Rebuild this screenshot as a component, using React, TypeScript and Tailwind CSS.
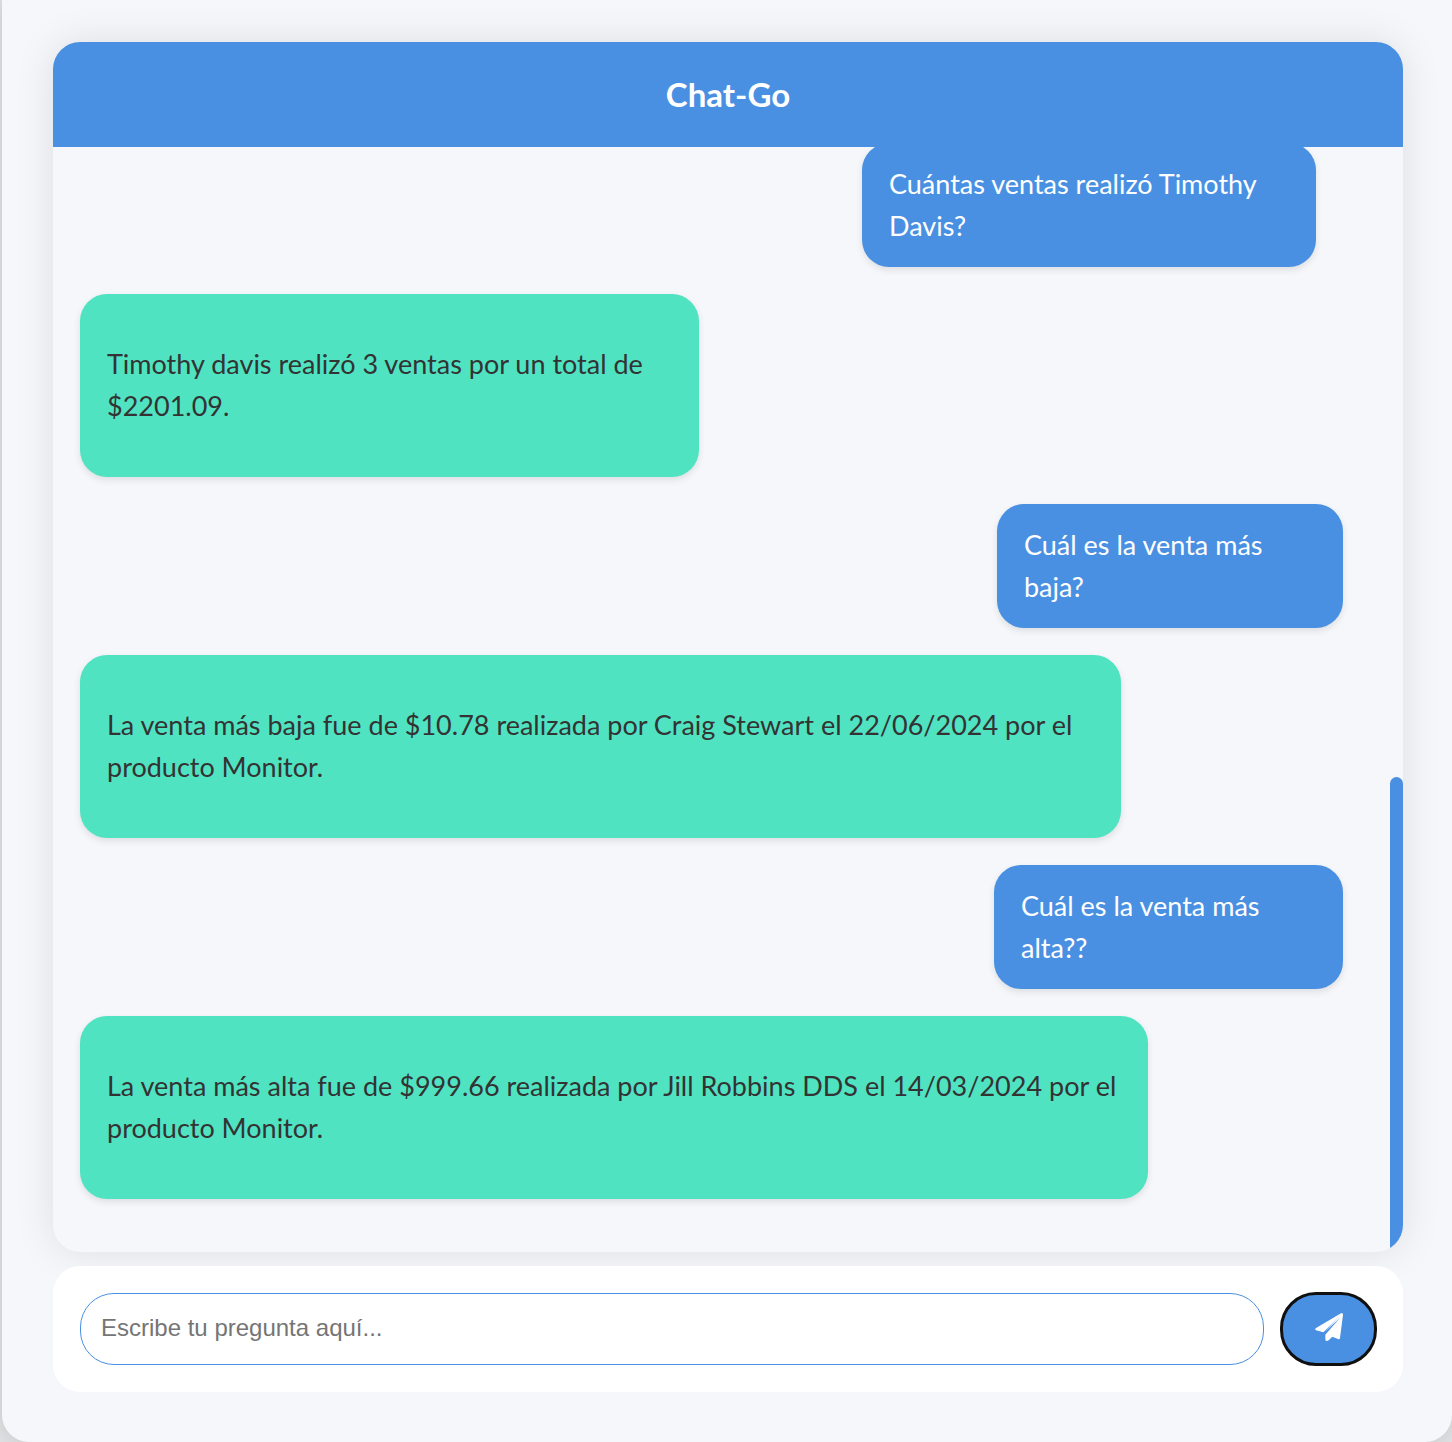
import { useState } from "react";
import type { FormEvent } from "react";

type Message = { from: "user" | "bot"; text: string; box: string };

const messages: Message[] = [
  { from: "user", text: "Cuántas ventas realizó Timothy Davis?", box: "w-[454px] mr-[47px]" },
  { from: "bot", text: "Timothy davis realizó 3 ventas por un total de $2201.09.", box: "w-[619px]" },
  { from: "user", text: "Cuál es la venta más baja?", box: "w-[346px] mr-5" },
  {
    from: "bot",
    text: "La venta más baja fue de $10.78 realizada por Craig Stewart el 22/06/2024 por el producto Monitor.",
    box: "w-[1041px]",
  },
  { from: "user", text: "Cuál es la venta más alta??", box: "w-[349px] mr-5" },
  {
    from: "bot",
    text: "La venta más alta fue de $999.66 realizada por Jill Robbins DDS el 14/03/2024 por el producto Monitor.",
    box: "w-[1068px]",
  },
];

function Bubble({ message }: { message: Message }) {
  const look =
    message.from === "user"
      ? "self-end bg-[#4a90e2] py-5 text-white"
      : "self-start bg-[#50e3c2] pt-[49px] pb-[50px] text-[#333333]";
  return (
    <li
      className={`max-w-full rounded-[27px] px-[27px] text-[27px] leading-[42px] shadow-[0_3px_7px_rgba(0,0,0,0.1)] ${look} ${message.box}`}
    >
      <p>{message.text}</p>
    </li>
  );
}

function PaperPlane() {
  return (
    <svg viewBox="0 0 84 84" className="size-[28px]" fill="currentColor" aria-hidden="true">
      <path d="M2 46 L78 1 Q81 0 80 2 L25 58 L3 52 Q-1 49 2 46 Z" />
      <path d="M80 1 Q84 0 84 5 L75 75 Q74 80 69 78 L52 71 L41 82 Q38 84 35 84 Q31 84 31 79 L31 65 L75 14 L28 58 Z" />
    </svg>
  );
}

export default function App() {
  const [question, setQuestion] = useState("");
  const submit = (event: FormEvent) => {
    event.preventDefault();
    setQuestion("");
  };

  return (
    <div className="overflow-hidden bg-[#dfe1e3] pl-0.5 font-['Lato',sans-serif]">
      <main className="rounded-b-[27px] bg-[#f5f7fa] pt-[42px] pr-[49px] pb-[50px] pl-[51px] shadow-[0_0_20px_rgba(0,0,0,0.12)]">
        <section className="overflow-hidden rounded-[27px] bg-[#f5f7fa] shadow-[0_0_40px_rgba(0,0,0,0.1)]">
          <header className="relative z-10 bg-[#4a90e2] py-[27px] text-center text-white">
            <h1 className="text-[33px] leading-[51px] font-bold">Chat-Go</h1>
          </header>
          <div className="flex">
            <ul className="-mt-1 flex min-w-0 flex-1 flex-col gap-[27px] px-[27px] pb-[53px]">
              {messages.map((message) => (
                <Bubble key={message.text} message={message} />
              ))}
            </ul>
            <div className="flex w-[13px] flex-col justify-end" aria-hidden="true">
              <div className="h-[43%] rounded-t-[7px] bg-[#4a90e2]" />
            </div>
          </div>
        </section>

        <form
          onSubmit={submit}
          className="relative mt-[14px] flex items-center gap-4 rounded-[27px] bg-white py-[26px] pr-[26px] pl-[27px]"
        >
          <input
            type="text"
            aria-label="Escribe tu pregunta aquí"
            placeholder="Escribe tu pregunta aquí..."
            value={question}
            onChange={(event) => setQuestion(event.target.value)}
            className="h-[72px] min-w-0 flex-1 rounded-[34px] border border-[#4a90e2] bg-white px-5 pb-[3px] font-['Liberation_Sans',sans-serif] text-[24px] text-[#333333] outline-none placeholder:text-[#757575]"
          />
          <button
            type="submit"
            aria-label="Enviar"
            className="flex h-[74px] w-[97px] items-center justify-center rounded-[36px] border-[3px] border-[#101010] bg-[#4a90e2] pb-1 text-white"
          >
            <PaperPlane />
          </button>
        </form>
      </main>
    </div>
  );
}
